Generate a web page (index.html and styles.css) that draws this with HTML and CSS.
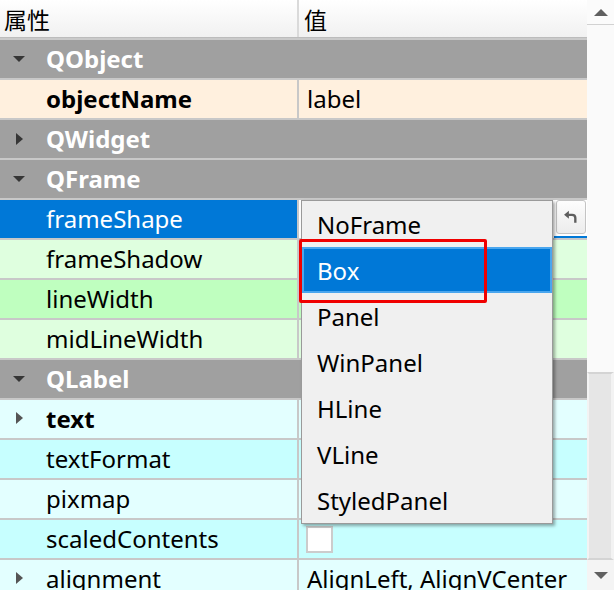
FILE: index.html
```html
<!DOCTYPE html>
<html>
<head>
<meta charset="utf-8">
<link rel="stylesheet" href="styles.css">
</head>
<body>
<div class="editor">
  <div class="table">
    <div class="header">
      <div class="hcell hkey">属性</div>
      <div class="hcell hval">值</div>
    </div>
    <div class="rows">
      <div class="row group"><span class="tw"><span class="arrow down"></span></span><span>QObject</span></div>
      <div class="row c-obj"><div class="k bold"><span class="tw"></span>objectName</div><div class="v">label</div></div>
      <div class="row group"><span class="tw"><span class="arrow right"></span></span><span>QWidget</span></div>
      <div class="row group"><span class="tw"><span class="arrow down"></span></span><span>QFrame</span></div>
      <div class="row selected"><div class="k"><span class="tw"></span>frameShape</div>
        <div class="v edit">
          <div class="resetwrap">
            <div class="reset">
              <svg width="15" height="15" viewBox="0 0 14 14"><path d="M1 4.5 L5.5 0.8 L5.5 8.2 Z" fill="#5e5e5e"/><path d="M5 4.5 H8.5 Q11.5 4.5 11.5 7.5 V12" fill="none" stroke="#5e5e5e" stroke-width="2.2"/></svg>
            </div>
            <div class="focusline"></div>
          </div>
        </div>
      </div>
      <div class="row c-frame-l"><div class="k"><span class="tw"></span>frameShadow</div><div class="v"></div></div>
      <div class="row c-frame"><div class="k"><span class="tw"></span>lineWidth</div><div class="v"></div></div>
      <div class="row c-frame-l"><div class="k"><span class="tw"></span>midLineWidth</div><div class="v"></div></div>
      <div class="row group"><span class="tw"><span class="arrow down"></span></span><span>QLabel</span></div>
      <div class="row c-label-l"><div class="k bold"><span class="tw"><span class="arrow right sub"></span></span>text</div><div class="v"></div></div>
      <div class="row c-label"><div class="k"><span class="tw"></span>textFormat</div><div class="v"></div></div>
      <div class="row c-label-l"><div class="k"><span class="tw"></span>pixmap</div><div class="v"></div></div>
      <div class="row c-label"><div class="k"><span class="tw"></span>scaledContents</div><div class="v"><span class="check"></span></div></div>
      <div class="row c-label-l"><div class="k"><span class="tw"><span class="arrow right sub"></span></span>alignment</div><div class="v">AlignLeft, AlignVCenter</div></div>
    </div>
  </div>
  <div class="scrollbar">
    <div class="sb-btn up"><span class="sb-arrow up"></span></div>
    <div class="sb-track"></div>
    <div class="sb-thumb"></div>
    <div class="sb-btn down"><span class="sb-arrow down"></span></div>
  </div>

  <div class="popup">
    <div class="item">NoFrame</div>
    <div class="item hot">Box</div>
    <div class="item">Panel</div>
    <div class="item">WinPanel</div>
    <div class="item">HLine</div>
    <div class="item">VLine</div>
    <div class="item">StyledPanel</div>
  </div>
  <div class="annot"></div>
</div>
</body>
</html>
```

FILE: styles.css
```css
html, body {
  margin: 0;
  padding: 0;
  width: 614px;
  height: 590px;
  overflow: hidden;
  background: #ffffff;
}

.editor {
  position: relative;
  display: flex;
  width: 614px;
  height: 590px;
  overflow: hidden;
  font-family: "Noto Sans", "Noto Sans CJK SC", sans-serif;
  font-size: 24px;
  color: #000000;
}

.table {
  width: 587px;
  display: flex;
  flex-direction: column;
  flex: none;
}

.header {
  display: flex;
  height: 37px;
  border-bottom: 1px solid #bcbcbc;
  background: linear-gradient(#ffffff, #f1f1f1);
  flex: none;
}

.hcell {
  display: flex;
  align-items: center;
  font-family: "Noto Sans CJK SC", sans-serif;
  font-size: 23px;
}

.hkey {
  width: 293px;
  padding-left: 4px;
  border-right: 2px solid #dadada;
}

.hval {
  flex: 1;
  padding-left: 5px;
}

.rows {
  border-top: 2px solid #cacaca;
  display: flex;
  flex-direction: column;
}

.row {
  display: flex;
  align-items: stretch;
  height: 38px;
  border-bottom: 2px solid #c8c8c8;
  flex: none;
}

.group {
  background: #a0a0a0;
  color: #ffffff;
  font-weight: bold;
  align-items: center;
  box-sizing: content-box;
}

.group > span:last-child {
  margin-bottom: 2px;
}

.tw {
  width: 46px;
  flex: none;
  display: flex;
  align-items: center;
  align-self: stretch;
}

.arrow {
  display: block;
  width: 0;
  height: 0;
}

.arrow.down {
  margin-left: 13px;
  border-left: 6px solid transparent;
  border-right: 6px solid transparent;
  border-top: 6px solid #363636;
}

.arrow.right {
  margin-left: 16px;
  border-top: 6px solid transparent;
  border-bottom: 6px solid transparent;
  border-left: 7px solid #363636;
}

.arrow.right.sub {
  border-left-color: #555555;
}

.k {
  width: 297px;
  flex: none;
  display: flex;
  align-items: center;
  border-right: 2px solid #c8c8c8;
  padding-bottom: 2px;
  box-sizing: content-box;
}

.bold {
  font-weight: bold;
}

.v {
  flex: 1;
  display: flex;
  align-items: center;
  padding-left: 8px;
  padding-bottom: 2px;
}

.c-obj { background: #fff0de; }
.c-frame { background: #bfffbf; }
.c-frame-l { background: #dfffdf; }
.c-label { background: #c7ffff; }
.c-label-l { background: #e3ffff; }

.selected .k {
  background: #0078d7;
  color: #ffffff;
}

.selected .v {
  background: #ffffff;
}

.v.edit {
  padding-left: 0;
  padding-bottom: 0;
  justify-content: flex-end;
  align-items: flex-start;
}

.resetwrap {
  width: 33px;
  height: 38px;
  display: flex;
  flex-direction: column;
  align-items: center;
}

.reset {
  width: 30px;
  height: 34px;
  box-sizing: border-box;
  border: 1px solid #c4c4c4;
  border-radius: 3px;
  background: linear-gradient(#fdfdfd, #ececec);
  display: flex;
  align-items: center;
  justify-content: center;
}

.focusline {
  margin-top: 2px;
  width: 33px;
  height: 2px;
  background: #0078d7;
}

.check {
  display: block;
  width: 27px;
  height: 27px;
  box-sizing: border-box;
  margin-left: -1px;
  margin-top: 2px;
  background: #ffffff;
  border: 2px solid #cccccc;
}

.scrollbar {
  width: 27px;
  flex: none;
  display: flex;
  flex-direction: column;
  background: #f9f9f9;
}

.sb-btn {
  flex: none;
  display: flex;
  justify-content: center;
  align-items: center;
}

.sb-btn.up {
  height: 24px;
  border-bottom: 1px solid #d2d2d2;
  background: #fbfbfb;
}

.sb-btn.down {
  height: 30px;
  background: #f4f4f4;
  align-items: flex-start;
  padding-top: 12px;
  box-sizing: border-box;
}

.sb-arrow {
  display: block;
  width: 0;
  height: 0;
  border-left: 7px solid transparent;
  border-right: 7px solid transparent;
}

.sb-arrow.up {
  border-bottom: 7px solid #606060;
}

.sb-arrow.down {
  border-top: 7px solid #606060;
}

.sb-track {
  flex: 1;
  background: #fafafa;
}

.sb-thumb {
  height: 188px;
  flex: none;
  background: #e6e6e6;
  border-left: 2px solid #f3f3f3;
  border-right: 3px solid #f3f3f3;
  border-top: 2px solid #d4d4d4;
  border-bottom: 2px solid #d4d4d4;
  box-sizing: border-box;
}

.popup {
  position: absolute;
  left: 301px;
  top: 200px;
  width: 252px;
  box-sizing: border-box;
  border: 1px solid #9a9a9a;
  background: #f0f0f0;
  box-shadow: 2px 2px 3px rgba(0, 0, 0, 0.35);
}

.item {
  height: 46px;
  display: flex;
  align-items: center;
  padding-left: 15px;
  box-sizing: border-box;
}

.item.hot {
  background: #0078d7;
  color: #ffffff;
  border: 2px solid #4aa6ee;
  padding-left: 13px;
}

.annot {
  position: absolute;
  left: 299px;
  top: 239px;
  width: 188px;
  height: 64px;
  box-sizing: border-box;
  border: 3px solid #f00000;
  border-radius: 2px;
}
```
